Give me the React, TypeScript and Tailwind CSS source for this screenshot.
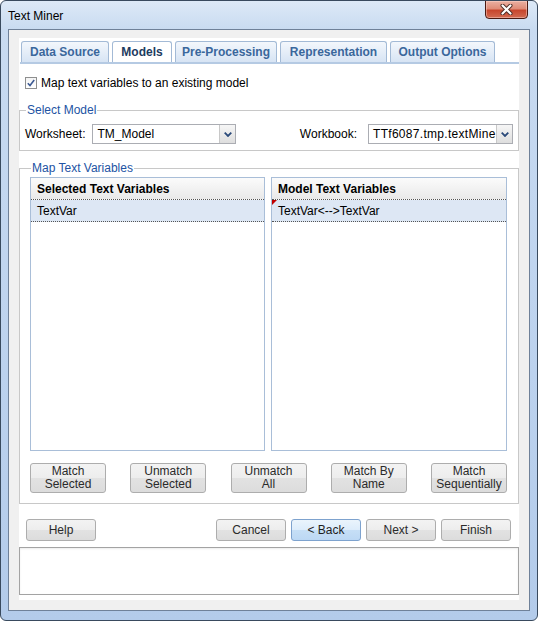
import React from 'react';

const tabs = [
    { label: 'Data Source', cls: 'w-[88px]', active: false },
    { label: 'Models', cls: 'w-[60px]', active: true },
    { label: 'Pre-Processing', cls: 'w-[102px]', active: false },
    { label: 'Representation', cls: 'w-[107px]', active: false },
    { label: 'Output Options', cls: 'w-[105px]', active: false },
];

const CloseButton: React.FC = () => (
    <div className="mr-[9px] w-[43px] h-[19px] -mt-px flex items-center justify-center rounded-b-[4px] border border-[#4a1a12] bg-[linear-gradient(to_bottom,#eab0a2_0%,#df8c78_45%,#c7462d_55%,#d26b52_100%)] shadow-[inset_0_0_0_1px_rgba(255,220,210,0.45)]">
        <svg width="13" height="11" viewBox="0 0 13 11">
            <path d="M2.5 1.5 L10.5 9.5 M10.5 1.5 L2.5 9.5" stroke="#4b2a24" strokeWidth="4" strokeLinecap="round" />
            <path d="M2.5 1.5 L10.5 9.5 M10.5 1.5 L2.5 9.5" stroke="#ffffff" strokeWidth="2.2" strokeLinecap="round" />
        </svg>
    </div>
);

const Checkbox: React.FC = () => (
    <div className="w-[12px] h-[12px] border border-[#8e8f8f] bg-[linear-gradient(to_bottom,#f4f4f4,#ffffff)] flex items-center justify-center">
        <svg width="8" height="8" viewBox="0 0 8 8">
            <path d="M0.8 4.2 L3 6.6 L7.2 1" fill="none" stroke="#3d5a93" strokeWidth="1.6" />
        </svg>
    </div>
);

const Dropdown: React.FC<{ value: string; className: string; textClass?: string }> = ({ value, className, textClass = '' }) => (
    <div className={`h-[20px] flex border border-[#abadb3] bg-white ${className}`}>
        <div className={`flex-1 overflow-hidden whitespace-nowrap pl-[4px] leading-[18px] ${textClass}`}>{value}</div>
        <div className="w-[16px] border-l border-[#c8c8c8] bg-[linear-gradient(to_bottom,#f6f6f6,#dedede)] flex items-center justify-center">
            <svg width="8" height="5" viewBox="0 0 8 5">
                <path d="M0.7 0.7 L4 4 L7.3 0.7" fill="none" stroke="#2b4a7a" strokeWidth="1.8" />
            </svg>
        </div>
    </div>
);

const Button: React.FC<{ children: React.ReactNode; className: string; primary?: boolean }> = ({ children, className, primary = false }) => (
    <div
        className={
            primary
                ? `flex flex-col items-center justify-center rounded-[3px] border border-[#7da2ce] bg-[linear-gradient(to_bottom,#eaf4fc_0%,#dcecfb_50%,#c6dff6_50%,#bcd8f4_100%)] text-[#1e1e1e] leading-[13px] ${className}`
                : `flex flex-col items-center justify-center rounded-[3px] border border-[#adadad] bg-[linear-gradient(to_bottom,#f3f3f3_0%,#ededed_50%,#e2e2e2_50%,#dcdcdc_100%)] text-[#2a2a2a] leading-[13px] ${className}`
        }
    >
        {children}
    </div>
);

const ListPanel: React.FC<{ title: string; row: string; className: string; marker?: boolean }> = ({ title, row, className, marker = false }) => (
    <div className={`h-[274px] border border-[#a9bed8] bg-white flex flex-col ${className}`}>
        <div className="h-[22px] shrink-0 flex items-center pl-[6px] font-bold border-b border-dotted border-[#555] bg-[linear-gradient(to_bottom,#fbfbfb,#e9e9e9)]">
            {title}
        </div>
        <div className="relative h-[22px] shrink-0 flex items-center pl-[6px] border-b border-dotted border-[#555] bg-[#dde7f4]">
            {marker && <span className="absolute top-0 left-0 w-0 h-0 border-t-[5px] border-r-[5px] border-t-[#c00000] border-r-transparent" />}
            {row}
        </div>
    </div>
);

const App: React.FC = () => {
    return (
        <div className="w-[538px] h-[621px] bg-white font-['Liberation_Sans',Arial,sans-serif] text-[12px] text-black">
            <div className="w-full h-full flex flex-col rounded-[6px] border border-[#394a5e] bg-[linear-gradient(to_bottom,#dde9f7_0px,#c9dbf1_28px,#bcd2ee_60%,#b3cbea_100%)] overflow-hidden">
                {/* title bar */}
                <div className="h-[28px] shrink-0 flex items-start justify-between">
                    <span className="pl-[7px] pt-[8px] leading-[14px]">Text Miner</span>
                    <CloseButton />
                </div>

                {/* client area */}
                <div className="mx-[7px] mb-[9px] flex-1 flex flex-col border border-[#6f8199] bg-[#f0f0f0] pt-[8px] pb-[10px] px-[10px]">
                    <div className="flex-1 flex flex-col bg-white">
                        <div className="flex gap-[3px] pl-[2px] pt-[3px]">
                            {tabs.map(t => (
                                <div
                                    key={t.label}
                                    className={
                                        t.active
                                            ? `h-[21px] ${t.cls} flex items-center justify-center rounded-t-[3px] border border-b-0 border-[#a3bad6] bg-white font-bold text-[#1d3b60]`
                                            : `h-[21px] ${t.cls} flex items-center justify-center rounded-t-[3px] border border-b-0 border-[#a3bad6] bg-[linear-gradient(to_bottom,#f3f7fc,#d7e4f4)] font-bold text-[#3a679c]`
                                    }
                                >
                                    {t.label}
                                </div>
                            ))}
                        </div>
                        <div className="ml-[1px] h-[2px] bg-[#b5cae3]" />

                        <div className="mt-[12px] h-[14px] pl-[6px] flex items-center gap-[4px]">
                            <Checkbox />
                            <span>Map text variables to an existing model</span>
                        </div>

                        <fieldset className="mt-[13px] border border-[#c8c8c8]">
                            <legend className="ml-[6px] px-[1px] leading-[14px] text-[#2253a3]">Select Model</legend>
                            <div className="flex items-center pt-[7px] pb-[6px] px-[5px]">
                                <span>Worksheet:</span>
                                <Dropdown value="TM_Model" className="ml-[7px] w-[144px]" />
                                <span className="ml-auto">Workbook:</span>
                                <Dropdown value="TTf6087.tmp.textMine" className="ml-[11px] w-[145px]" textClass="tracking-[0.3px] pl-[2px]" />
                            </div>
                        </fieldset>

                        <fieldset className="mt-[10px] border border-[#c8c8c8]">
                            <legend className="ml-[11px] px-[1px] leading-[14px] text-[#2253a3]">Map Text Variables</legend>
                            <div className="pt-[2px] pb-[10px] pl-[10px] pr-[11px]">
                                <div className="flex gap-[6px]">
                                    <ListPanel title="Selected Text Variables" row="TextVar" className="w-[235px]" />
                                    <ListPanel title="Model Text Variables" row="TextVar<-->TextVar" className="flex-1" marker />
                                </div>
                                <div className="mt-[12px] flex justify-between">
                                    <Button className="w-[76px] h-[30px]"><span>Match</span><span>Selected</span></Button>
                                    <Button className="w-[76px] h-[30px]"><span>Unmatch</span><span>Selected</span></Button>
                                    <Button className="w-[76px] h-[30px]"><span>Unmatch</span><span>All</span></Button>
                                    <Button className="w-[76px] h-[30px]"><span>Match By</span><span>Name</span></Button>
                                    <Button className="w-[76px] h-[30px]"><span>Match</span><span>Sequentially</span></Button>
                                </div>
                            </div>
                        </fieldset>

                        <div className="mt-[15px] flex items-center pl-[7px] pr-[8px]">
                            <Button className="w-[70px] h-[22px]">Help</Button>
                            <div className="ml-auto flex gap-[5px]">
                                <Button className="w-[70px] h-[22px]">Cancel</Button>
                                <Button className="w-[70px] h-[22px]" primary>&lt; Back</Button>
                                <Button className="w-[70px] h-[22px]">Next &gt;</Button>
                                <Button className="w-[70px] h-[22px]">Finish</Button>
                            </div>
                        </div>

                        <div className="mt-[6px] h-[48px] border border-[#a3a3a3] bg-white shadow-[inset_0_1px_2px_rgba(0,0,0,0.08)]" />
                    </div>
                </div>
            </div>
        </div>
    );
};

export default App;
